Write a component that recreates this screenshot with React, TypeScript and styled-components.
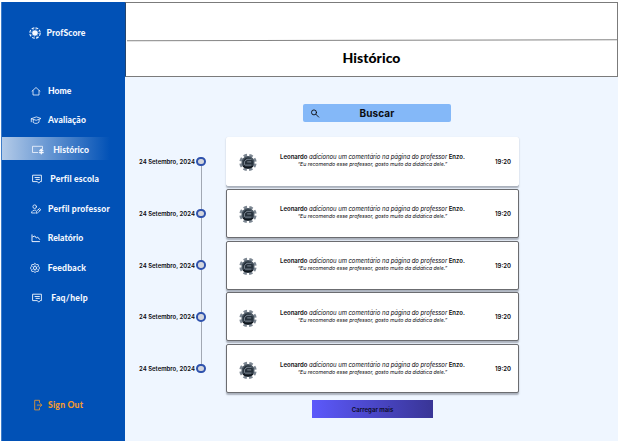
import React from "react";
import styled, { createGlobalStyle, css } from "styled-components";

const GlobalStyle = createGlobalStyle`
  * { box-sizing: border-box; }
  body { margin: 0; background: #fff; overflow: hidden; }
  button { border: 0; padding: 0; background: none; text-align: left; }
`;

const Page = styled.div`
  display: flex;
  width: 620px;
  height: 443px;
  padding: 2px 2px 2px 1px;
  background: #fff;
  color: #0b0b0f;
  font-family: "Inter", sans-serif;
`;

const Sidebar = styled.aside`
  display: flex;
  flex-direction: column;
  flex: 0 0 124px;
  height: 439px;
  background: #0151b6;
  border-left: 1px solid #3f7dc9;
  color: #f4f8ff;
  font-family: "Lato", sans-serif;
`;

const Brand = styled.div`
  display: flex;
  align-items: center;
  height: 22px;
  margin-top: 20px;
  padding-left: 27px;
  gap: 5.5px;
`;

const Label = styled.span<{ $spacing?: number }>`
  font-size: 8.6px;
  font-weight: 900;
  line-height: 12px;
  letter-spacing: ${(p) => p.$spacing ?? 0}px;
  white-space: nowrap;
`;

const Nav = styled.nav`
  display: flex;
  flex-direction: column;
  gap: 6.6px;
  margin-top: 35px;
`;

const NavItem = styled.button<{ $indent: number; $gap: number; $active?: boolean }>`
  display: flex;
  align-items: center;
  height: 23px;
  width: 108px;
  padding-left: ${(p) => p.$indent}px;
  gap: ${(p) => p.$gap}px;
  color: inherit;
  font-family: inherit;
  ${(p) =>
    p.$active &&
    css`
      margin-top: -1px;
      padding-top: 1px;
      height: 24px;
      background: linear-gradient(90deg, #b4cbe8 0%, #0151b6 100%) 0 0 / 100% 23px no-repeat;
    `}
`;

const SignOut = styled(NavItem)`
  margin-top: auto;
  margin-bottom: 25px;
  color: #f59a2c;
`;

const Glyph = styled.svg`
  flex: none;
  display: block;
  overflow: visible;
  fill: none;
  stroke: currentColor;
  stroke-linecap: round;
  stroke-linejoin: round;
`;

const Ring = styled.circle`
  stroke-linecap: butt;
`;

const Main = styled.main`
  display: flex;
  flex-direction: column;
  flex: 1;
  background: #eff6ff;
`;

const Header = styled.header`
  height: 75px;
  border: 1px solid #7b7b7b;
  border-left-color: #24456f;
  background: #fff;
`;

const TopBar = styled.div`
  height: 36.5px;
`;

const Divider = styled.hr`
  width: 490px;
  height: 1px;
  margin: 0 0 0 1px;
  border: 0;
  background: #858585;
  transform: translateY(-0.3px) rotate(-0.12deg);
`;

const Title = styled.h1`
  margin: 0;
  height: 35px;
  text-align: center;
  font: 900 14px/33px "Lato", sans-serif;
  letter-spacing: 0.05px;
  color: #000;
`;

const Search = styled.div`
  display: flex;
  align-items: center;
  width: 148px;
  height: 18px;
  margin: 27.4px 0 0 178px;
  padding-left: 8px;
  border-radius: 2px;
  background: #84b8f8;
`;

const SearchText = styled.span`
  flex: 1;
  padding-right: 17px;
  text-align: center;
  font-size: 10px;
  font-weight: 700;
  line-height: 17px;
  letter-spacing: 0.08px;
`;

const Timeline = styled.ol`
  display: flex;
  flex-direction: column;
  gap: 2.8px;
  margin: 14.6px 0 0;
  padding: 0;
  list-style: none;
`;

const Entry = styled.li`
  display: flex;
  align-items: center;
  height: 49px;
`;

const DateText = styled.time`
  width: 71px;
  padding: 1px 0 0 14px;
  font-size: 6px;
  font-weight: 600;
  line-height: 8px;
  white-space: nowrap;
`;

const Marker = styled.span<{ $last?: boolean }>`
  position: relative;
  width: 9.5px;
  height: 9.5px;
  border: 2px solid #2f52ad;
  border-radius: 50%;
  background: #d4d6dd;
  ${(p) =>
    !p.$last &&
    css`
      &::after {
        content: "";
        position: absolute;
        left: 2.5px;
        top: 7.5px;
        width: 1px;
        height: 43px;
        background: #a2a8b3;
      }
    `}
`;

const Card = styled.article<{ $plain?: boolean }>`
  display: flex;
  align-items: center;
  width: 293px;
  height: 49px;
  margin-left: 20.5px;
  padding: 0 7px 0 12px;
  border: 1px solid ${(p) => (p.$plain ? "#fff" : "#6b6c70")};
  border-radius: 2px;
  background: #fff;
  box-shadow: 0 1.5px 1.5px rgba(40, 45, 60, 0.35);
`;

const Message = styled.div`
  flex: 1;
  padding: 0 7px 1px 0;
  text-align: center;
  white-space: nowrap;
`;

const Action = styled.p`
  margin: 0;
  font-size: 6px;
  font-style: italic;
  line-height: 8px;
  letter-spacing: -0.06px;
  b { font-style: normal; font-weight: 600; letter-spacing: 0; }
`;

const Quote = styled.p`
  margin: 0;
  font-size: 5.2px;
  font-style: italic;
  line-height: 7px;
  letter-spacing: -0.04px;
`;

const Hour = styled.time`
  width: 16px;
  font-size: 6px;
  font-weight: 600;
  text-align: right;
`;

const LoadMore = styled.button`
  width: 121px;
  height: 18px;
  margin: 6.6px 0 0 187px;
  background: linear-gradient(90deg, #5c59fb, #393596);
  text-align: center;
  font: 600 6.1px/19px "Inter", sans-serif;
  color: #0b0a25;
`;

type IconName = "home" | "cap" | "screen" | "note" | "person" | "chart" | "gear" | "exit";

const icons: Record<IconName, React.ReactNode> = {
  home: <path d="M1 5.2 5 1.5l4 3.7M2 4.7V9h6V4.7" />,
  cap: <path d="M.3 3.7 5.4 1.9l4.6 1.6-4.8 1.8L.3 3.7v3.1M2.4 4.8l-.3 2.5c1.6 1.5 4 1.5 5.8 0l.3-2.5" />,
  screen: (
    <>
      <path d="M5.8 7.5H.5V1.3h10v2.5" />
      <path d="M9.3 4.4v4.4M7.8 5.8l1.5-1.5 1.5 1.5M7.6 7.6h3.6" strokeWidth="1.3" />
    </>
  ),
  note: <path d="M1 1.2h8.4v6.4H8.1L6.7 9.2 5.4 7.6H1zM3 3.5h4.4M4 5.4h3.4" strokeWidth="0.9" />,
  person: (
    <>
      <circle cx="3.7" cy="2.7" r="1.8" />
      <path d="M4.8 6.2C2.4 5.7.6 7 .5 9h3.6M5.2 8.9l.3-1.7 3-2.8 1.3 1.4-3 2.8zM7.4 5.3 8.8 6.7" />
    </>
  ),
  chart: <path d="M1 1.8V8.6h7.5M1.8 3.8l2-.8 1.5 2 1.4-.9 1.9 2.3" strokeWidth="0.95" />,
  gear: (
    <>
      <path d="m5 .5 1.3 1 1.9.1.4 1.8 1 1.6-1 1.6-.4 1.8-1.9.1-1.3 1-1.3-1-1.9-.1-.4-1.8L.4 5l1-1.6.4-1.8 1.9-.1z" />
      <circle cx="5" cy="5" r="1.6" />
      <path d="M5 2.2v1M5 6.8v1M2.6 3.6l.9.5M6.5 5.9l.9.5M7.4 3.6l-.9.5M3.5 5.9l-.9.5" strokeWidth="0.6" />
    </>
  ),
  exit: <path d="M6.5 2.4V.3H1.7v9.6h4.8V8M4.3 5.1h4.4M7.2 3.6l1.6 1.5-1.6 1.5" />,
};

const Icon = ({ name }: { name: IconName }) => (
  <Glyph width="10" height="10" viewBox="0 0 10 10" strokeWidth="0.8">
    {icons[name]}
  </Glyph>
);

const BrandMark = () => (
  <Glyph width="12" height="12" viewBox="0 0 12 12">
    <Ring cx="6" cy="6" r="5.2" strokeWidth="1.1" strokeDasharray="2.8 1.28" />
    <Ring cx="6" cy="6" r="3.8" strokeWidth="0.7" strokeDasharray="1 1.98" />
    <circle cx="6" cy="6" r="2.8" fill="currentColor" stroke="none" />
  </Glyph>
);

const Avatar = () => (
  <Glyph width="18" height="18" viewBox="0 -1.5 18 18">
    <Ring cx="9" cy="9" r="7.4" stroke="#7d8792" strokeWidth="2.6" strokeDasharray="3.5 2.31" strokeDashoffset="-1.15" />
    <circle cx="9" cy="9" r="5.8" fill="#26303a" stroke="#46525e" strokeWidth="1.4" />
    <path d="M5.4 11V8.2l2.6-2.4h4.2M8.6 8.4h3.2M6.5 11.6h5.6" stroke="#94a0ac" strokeWidth="0.8" />
    <path d="M4.6 12.8c2.4 2 6.4 2 8.8 0" stroke="#0f161d" strokeWidth="1.5" />
  </Glyph>
);

const navItems: { icon: IconName; text: string; indent: number; gap: number; spacing: number }[] = [
  { icon: "home", text: "Home", indent: 29, gap: 7, spacing: 0 },
  { icon: "cap", text: "Avaliação", indent: 28.5, gap: 7.5, spacing: 0.12 },
  { icon: "screen", text: "Histórico", indent: 30, gap: 11.2, spacing: 0.06 },
  { icon: "note", text: "Perfil escola", indent: 29.5, gap: 8.8, spacing: 0.16 },
  { icon: "person", text: "Perfil professor", indent: 29, gap: 7, spacing: 0.18 },
  { icon: "chart", text: "Relatório", indent: 29, gap: 6.8, spacing: 0.06 },
  { icon: "gear", text: "Feedback", indent: 28.3, gap: 7.5, spacing: 0.2 },
  { icon: "note", text: "Faq/help", indent: 30.3, gap: 9, spacing: 0.3 },
];

const activeItem = "Histórico";
const entries = [1, 2, 3, 4, 5];

export default function App() {
  return (
    <>
      <GlobalStyle />
      <Page>
        <Sidebar>
          <Brand>
            <BrandMark />
            <Label $spacing={0.12}>ProfScore</Label>
          </Brand>
          <Nav>
            {navItems.map((item) => (
              <NavItem key={item.text} $indent={item.indent} $gap={item.gap} $active={item.text === activeItem}>
                <Icon name={item.icon} />
                <Label $spacing={item.spacing}>{item.text}</Label>
              </NavItem>
            ))}
          </Nav>
          <SignOut $indent={31} $gap={5}>
            <Icon name="exit" />
            <Label $spacing={0.2}>Sign Out</Label>
          </SignOut>
        </Sidebar>
        <Main>
          <Header>
            <TopBar />
            <Divider />
            <Title>Histórico</Title>
          </Header>
          <Search>
            <Glyph width="9" height="9" viewBox="0 0 9 9" strokeWidth="0.9">
              <circle cx="3" cy="3.4" r="2.5" />
              <path d="m4.9 5.3 2.8 2.8" />
            </Glyph>
            <SearchText>Buscar</SearchText>
          </Search>
          <Timeline>
            {entries.map((id, index) => (
              <Entry key={id}>
                <DateText>24 Setembro, 2024</DateText>
                <Marker $last={index === entries.length - 1} />
                <Card $plain={index === 0}>
                  <Avatar />
                  <Message>
                    <Action>
                      <b>Leonardo</b> adicionou um comentário na página do professor <b>Enzo.</b>
                    </Action>
                    <Quote>“Eu recomendo esse professor, gosto muito da didática dele.”</Quote>
                  </Message>
                  <Hour>19:20</Hour>
                </Card>
              </Entry>
            ))}
          </Timeline>
          <LoadMore>Carregar mais</LoadMore>
        </Main>
      </Page>
    </>
  );
}
